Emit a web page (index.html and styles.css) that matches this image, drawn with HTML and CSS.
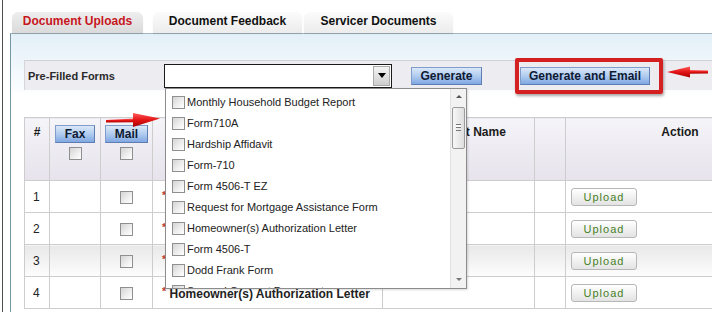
FILE: index.html
```html
<!DOCTYPE html>
<html lang="en">
<head>
  <meta charset="UTF-8">
  <title>Document Uploads</title>
  <link rel="stylesheet" href="styles.css">
</head>
<body>

<div class="page">
  <div class="tabs">
    <div class="tab active">Document Uploads</div>
    <div class="tab">Document Feedback</div>
    <div class="tab">Servicer Documents</div>
  </div>

  <div class="panel">
    <div class="forms-bar">
      <span class="bar-label">Pre-Filled Forms</span>
      <div class="combo">
        <span class="combo-arrow"></span>
        <div class="combo-list">
          <div class="combo-items">
            <div class="combo-item"><span class="chk"></span>Monthly Household Budget Report</div>
            <div class="combo-item"><span class="chk"></span>Form710A</div>
            <div class="combo-item"><span class="chk"></span>Hardship Affidavit</div>
            <div class="combo-item"><span class="chk"></span>Form-710</div>
            <div class="combo-item"><span class="chk"></span>Form 4506-T EZ</div>
            <div class="combo-item"><span class="chk"></span>Request for Mortgage Assistance Form</div>
            <div class="combo-item"><span class="chk"></span>Homeowner(s) Authorization Letter</div>
            <div class="combo-item"><span class="chk"></span>Form 4506-T</div>
            <div class="combo-item"><span class="chk"></span>Dodd Frank Form</div>
            <div class="combo-item"><span class="chk"></span>Spousal Consent Document</div>
          </div>
          <div class="scrollbar">
            <span class="scroll-btn up"></span>
            <span class="scroll-thumb"><span class="grip"></span></span>
            <span class="scroll-fill"></span>
            <span class="scroll-btn down"></span>
          </div>
        </div>
      </div>
      <button class="btn-blue btn-generate">Generate</button>
      <button class="btn-blue btn-email">Generate and Email</button>
    </div>

    <table class="docs">
      <colgroup>
        <col class="c-num"><col class="c-fax"><col class="c-mail"><col class="c-type">
        <col class="c-name"><col class="c-extra"><col class="c-action">
      </colgroup>
      <thead>
        <tr>
          <th>#</th>
          <th><button class="btn-blue btn-small">Fax</button><span class="chk"></span></th>
          <th><button class="btn-blue btn-small btn-mail">Mail</button><span class="chk"></span></th>
          <th></th>
          <th>Document Name</th>
          <th></th>
          <th>Action</th>
        </tr>
      </thead>
      <tbody>
        <tr>
          <td class="num">1</td><td></td><td class="mid"><span class="chk"></span></td>
          <td class="type"><span class="req">*</span></td>
          <td></td><td></td><td class="action"><button class="btn-upload">Upload</button></td>
        </tr>
        <tr>
          <td class="num">2</td><td></td><td class="mid"><span class="chk"></span></td>
          <td class="type"><span class="req">*</span></td>
          <td></td><td></td><td class="action"><button class="btn-upload">Upload</button></td>
        </tr>
        <tr class="alt">
          <td class="num">3</td><td></td><td class="mid"><span class="chk"></span></td>
          <td class="type"><span class="req">*</span></td>
          <td></td><td></td><td class="action"><button class="btn-upload">Upload</button></td>
        </tr>
        <tr>
          <td class="num">4</td><td></td><td class="mid"><span class="chk"></span></td>
          <td class="type"><span class="req">*</span> Homeowner(s) Authorization Letter</td>
          <td></td><td></td><td class="action"><button class="btn-upload">Upload</button></td>
        </tr>
      </tbody>
    </table>
  </div>

  <!-- annotations drawn over the screenshot -->
  <span class="highlight"></span>
  <svg class="arrow arrow-left" width="60" height="20" viewBox="0 0 60 20">
    <defs>
      <linearGradient id="redL" x1="0" y1="0" x2="0" y2="1">
        <stop offset="0" stop-color="#ff5a5a"/>
        <stop offset="0.5" stop-color="#e31414"/>
        <stop offset="1" stop-color="#a80000"/>
      </linearGradient>
    </defs>
    <path d="M2 10 L31 8.6 L31 12.2 L2 12.6 Z" fill="url(#redL)"/>
    <path d="M29 3 L56 8.5 L29 17 Z" fill="url(#redL)"/>
  </svg>
  <svg class="arrow arrow-right" width="46" height="18" viewBox="0 0 46 18">
    <path d="M24 7 L44 7.4 L44 10.6 L24 10.8 Z" fill="url(#redL)"/>
    <path d="M3 9 L26 3.5 L26 14.5 Z" fill="url(#redL)"/>
  </svg>
</div>

</body>
</html>
```

FILE: styles.css
```css
body {
  margin: 0;
  background: #fff;
  font-family: "Liberation Sans", Arial, sans-serif;
  font-size: 12px;
  color: #111;
  overflow: hidden;
}
.page {
  position: relative;
  width: 800px;
  height: 312px;
  margin-left: 2px;
  border-left: 1px solid #4d4d4d;
  overflow: hidden;
}

/* tabs */
.tabs {
  display: flex;
  padding: 12px 0 0 9px;
  height: 21px;
}
.tab {
  width: 149px;
  height: 21px;
  line-height: 19px;
  text-align: center;
  font-weight: bold;
  color: #111;
  border-radius: 6px 6px 0 0;
  background: linear-gradient(#fbfbfb, #ececec);
  box-shadow: 0 1px 1px rgba(0, 0, 0, 0.12);
  margin-left: 2px;
}
.tab.active {
  width: 131px;
  margin: 0 8px 0 0;
  color: #c8161d;
  background: linear-gradient(#eeeeee, #dadada);
}

/* panel */
.panel {
  margin-left: 7px;
  height: 278px;
  padding: 26px 0 0 13px;
  border-top: 1px solid #a3b6bf;
  border-left: 1px solid #7797a5;
  background: linear-gradient(#e3f0f8, #fbfdfe 58px, #fff 60px);
}
.forms-bar {
  display: flex;
  align-items: center;
  height: 29px;
  padding-left: 3px;
  border-top: 1px solid #d2d1d8;
  border-left: 1px solid #d6d6d6;
  background: #edecf1;
}
.bar-label {
  width: 136px;
  font-size: 11px;
  font-weight: bold;
  color: #2a2a2a;
}
.combo {
  position: relative;
  width: 228px;
  height: 24px;
  box-sizing: border-box;
  border: 1px solid #1a1a1a;
  background: #fff;
  display: flex;
  justify-content: flex-end;
  align-items: center;
  padding-right: 1px;
}
.combo-arrow {
  width: 17px;
  height: 20px;
  box-sizing: border-box;
  border: 1px solid #a9a9a9;
  background: linear-gradient(#f4f4f4, #cdcdcd);
  display: flex;
  align-items: center;
  justify-content: center;
}
.combo-arrow::after {
  content: "";
  border-left: 4px solid transparent;
  border-right: 4px solid transparent;
  border-top: 5px solid #000;
}
.combo-list {
  position: absolute;
  top: 23px;
  left: 0;
  z-index: 2;
  width: 302px;
  height: 201px;
  box-sizing: border-box;
  border: 1px solid #8c8c8c;
  background: #fff;
  display: flex;
  box-shadow: 1px 1px 2px rgba(0, 0, 0, 0.15);
}
.combo-items {
  flex: 1;
  overflow: hidden;
  padding: 3px 0 0 6px;
}
.combo-item {
  display: flex;
  align-items: center;
  gap: 2px;
  height: 21px;
  font-size: 11px;
  color: #222;
  white-space: nowrap;
}
.scrollbar {
  width: 15px;
  display: flex;
  flex-direction: column;
  align-items: center;
  background: #f2f2f2;
  border-left: 1px solid #e2e2e2;
}
.scroll-btn {
  height: 16px;
  width: 15px;
  display: flex;
  align-items: center;
  justify-content: center;
}
.scroll-btn.up::after {
  content: "";
  border-left: 3px solid transparent;
  border-right: 3px solid transparent;
  border-bottom: 3px solid #555;
}
.scroll-btn.down::after {
  content: "";
  border-left: 3px solid transparent;
  border-right: 3px solid transparent;
  border-top: 3px solid #777;
}
.scroll-thumb {
  width: 13px;
  height: 42px;
  margin-top: 2px;
  box-sizing: border-box;
  border: 1px solid #9b9b9b;
  border-radius: 2px;
  background: linear-gradient(90deg, #f7f7f7, #dedede);
  display: flex;
  align-items: center;
  justify-content: center;
}
.grip {
  width: 5px;
  height: 5px;
  border-top: 1px solid #777;
  border-bottom: 1px solid #777;
  background: linear-gradient(#fff 2px, #777 2px, #777 3px, transparent 3px);
}
.scroll-fill { flex: 1; }

.chk {
  display: inline-block;
  flex: none;
  width: 13px;
  height: 13px;
  box-sizing: border-box;
  border: 1px solid #8f8f8f;
  background: linear-gradient(135deg, #d4d4d4, #f0f0f0 60%, #fff);
}

.btn-blue {
  height: 18px;
  padding: 0;
  border: 1px solid #7f9ccb;
  border-right-color: #5d7db3;
  border-bottom-color: #5d7db3;
  background: linear-gradient(#dbe8f8, #b0cbef 50%, #80a8e2);
  font-family: "Liberation Sans", Arial, sans-serif;
  font-size: 12px;
  font-weight: bold;
  color: #0f1a33;
}
.btn-generate {
  width: 71px;
  margin-left: 19px;
}
.btn-email {
  width: 130px;
  margin-left: 38px;
}

/* table */
.docs {
  margin-top: 27px;
  width: 770px;
  table-layout: fixed;
  border-collapse: collapse;
}
.c-num { width: 25px; }
.c-fax { width: 51px; }
.c-mail { width: 52px; }
.c-type { width: 230px; }
.c-name { width: 152px; }
.c-extra { width: 31px; }
.c-action { width: 229px; }
.docs th, .docs td {
  border: 1px solid #cdcdcd;
  padding: 0;
}
.docs th {
  height: 63px;
  vertical-align: top;
  padding-top: 7px;
  box-sizing: border-box;
  font-size: 12px;
  font-weight: bold;
  color: #1a1a1a;
  background: linear-gradient(#f5f4f8, #e6e3ec);
}
.docs th .chk {
  display: block;
  margin: 4px auto 0;
}
.btn-small { width: 40px; }
.btn-mail { width: 43px; }
.docs td {
  height: 31px;
  vertical-align: middle;
  color: #222;
}
.docs tr.alt td {
  background: linear-gradient(#e8e8e8, #fdfdfd);
}
.docs td.num { padding-left: 8px; }
.docs td.mid { text-align: center; }
.docs td.mid .chk { vertical-align: middle; }
.docs td.type {
  padding-left: 9px;
  font-weight: bold;
  white-space: nowrap;
  overflow: hidden;
}
.req {
  color: #c0392b;
  font-size: 11px;
  vertical-align: 3px;
}
.docs td.action { padding-left: 5px; }
.btn-upload {
  width: 66px;
  height: 18px;
  padding: 0;
  border: 1px solid #b7b7b7;
  border-radius: 3px;
  background: linear-gradient(#ffffff, #e3e3e3);
  font-family: "Liberation Sans", Arial, sans-serif;
  font-size: 11px;
  letter-spacing: 1px;
  color: #468026;
  display: block;
}

/* annotations */
.highlight {
  position: absolute;
  left: 512px;
  top: 58px;
  width: 148px;
  height: 36px;
  box-sizing: border-box;
  border: 4px solid #d42020;
  border-radius: 2px;
  box-shadow: 1px 2px 3px rgba(0, 0, 0, 0.35);
}
.arrow {
  position: absolute;
}
.arrow-left {
  left: 101px;
  top: 110px;
}
.arrow-right {
  left: 661px;
  top: 63px;
}
```
